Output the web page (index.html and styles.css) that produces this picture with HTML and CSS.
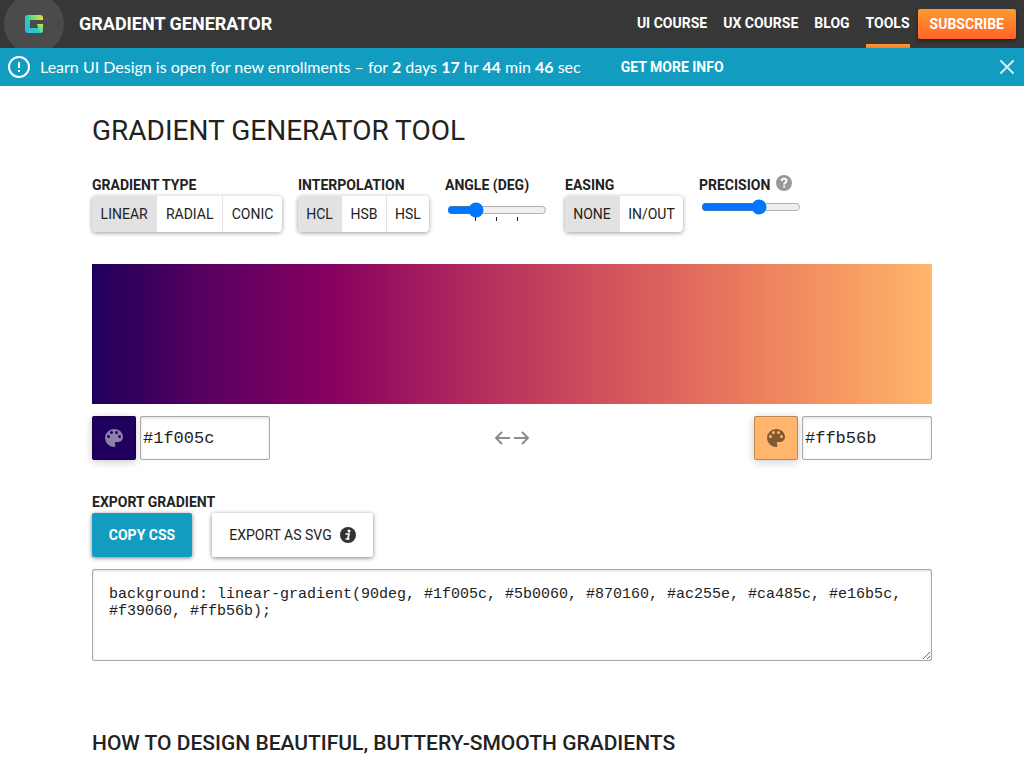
FILE: index.html
```html
<!DOCTYPE html>
<html lang="en">
<head>
<meta charset="utf-8">
<meta name="viewport" content="width=device-width, initial-scale=1">
<title>Gradient Generator</title>
<link rel="stylesheet" href="styles.css">
</head>
<body>
<header class="topbar">
  <a class="logo" href="#" aria-label="Home">
    <svg width="18" height="18" viewBox="0 0 18 18" aria-hidden="true">
      <defs>
        <linearGradient id="g-top" x1="0" x2="1"><stop offset="0" stop-color="#19d3b2"/><stop offset="1" stop-color="#e8e337"/></linearGradient>
        <linearGradient id="g-side" x1="0" y1="0" x2="0" y2="1"><stop offset="0" stop-color="#1fd3ae"/><stop offset="1" stop-color="#35b5e6"/></linearGradient>
        <linearGradient id="g-base" x1="0" x2="1"><stop offset="0" stop-color="#35b5e6"/><stop offset="1" stop-color="#27d8b4"/></linearGradient>
      </defs>
      <path d="M3 0h12q3 0 3 3v2h-13l-5-2q0-3 3-3z" fill="url(#g-top)"/>
      <path d="M0 3q0-2 2-2l3 4v8l-3 5q-2-1-2-3z" fill="url(#g-side)"/>
      <path d="M5 13h8l5-2v4q0 3-3 3h-12q-2 0-2-2z" fill="url(#g-base)"/>
      <path d="M12 9h6v6q0 2-2 3l-3-5z" fill="#6fe08e"/>
      <path d="M12 9h6v3z" fill="#b7e65a"/>
    </svg>
  </a>
  <span class="site-name">GRADIENT GENERATOR</span>
  <nav class="nav">
    <a href="#">UI COURSE</a>
    <a href="#">UX COURSE</a>
    <a href="#">BLOG</a>
    <a href="#" class="current" aria-current="page">TOOLS</a>
  </nav>
  <a class="subscribe" href="#">SUBSCRIBE</a>
</header>

<aside class="banner">
  <svg width="22" height="22" viewBox="0 0 22 22" fill="none" stroke="#fff" stroke-width="2" aria-hidden="true">
    <circle cx="11" cy="11" r="10"/><path d="M11 6v6M11 14v2"/>
  </svg>
  <p class="banner-text">Learn UI Design is open for new enrollments – for <b>2</b> days <b>17</b> hr <b>44</b> min <b>46</b> sec</p>
  <a class="banner-link" href="#">GET MORE INFO</a>
  <button class="close" type="button" aria-label="Close">
    <svg width="14" height="14" viewBox="0 0 14 14" fill="none" stroke="#d3eef5" stroke-width="2" stroke-linecap="round"><path d="M1 1l12 12M13 1L1 13"/></svg>
  </button>
</aside>

<main class="page">
  <h1 class="title">GRADIENT GENERATOR TOOL</h1>

  <div class="controls">
    <div class="control">
      <span class="label" id="type-label">GRADIENT TYPE</span>
      <div class="segments" role="group" aria-labelledby="type-label">
        <button type="button" aria-pressed="true">LINEAR</button>
        <button type="button" aria-pressed="false">RADIAL</button>
        <button type="button" aria-pressed="false">CONIC</button>
      </div>
    </div>
    <div class="control">
      <span class="label" id="interp-label">INTERPOLATION</span>
      <div class="segments" role="group" aria-labelledby="interp-label">
        <button type="button" aria-pressed="true">HCL</button>
        <button type="button" aria-pressed="false">HSB</button>
        <button type="button" aria-pressed="false">HSL</button>
      </div>
    </div>
    <div class="control">
      <label class="label" for="angle">ANGLE (DEG)</label>
      <input class="slider" type="range" id="angle" min="0" max="360" value="90" list="angles">
      <datalist id="angles"><option value="90"></option><option value="180"></option><option value="270"></option></datalist>
    </div>
    <div class="control">
      <span class="label" id="easing-label">EASING</span>
      <div class="segments" role="group" aria-labelledby="easing-label">
        <button type="button" aria-pressed="true">NONE</button>
        <button type="button" aria-pressed="false">IN/OUT</button>
      </div>
    </div>
    <div class="control">
      <div class="label-row">
        <label class="label" for="precision">PRECISION</label>
        <svg class="help" width="16" height="16" viewBox="0 0 16 16" aria-hidden="true"><circle cx="8" cy="8" r="8" fill="#999"/><path d="M5.600 6q.2-2.200 2.500-2.200T10.500 5.900q0 1.200-1.300 1.900-1 .5-1 1.600" fill="none" stroke="#fff" stroke-width="2"/><path d="M7.200 10.500h2v2h-2z" fill="#fff"/></svg>
      </div>
      <input class="slider" type="range" id="precision" min="0" max="100" value="60">
    </div>
  </div>

  <div class="preview"></div>

  <div class="colors">
    <div class="color">
      <button class="swatch swatch-start" type="button" aria-label="Pick start color">
        <svg width="24" height="24" viewBox="0 0 24 24" fill="currentColor" aria-hidden="true"><path d="M12 3a9 9 0 0 0 0 18c.83 0 1.500-.67 1.500-1.500 0-.39-.15-.74-.39-1.010-.23-.26-.38-.61-.38-.99 0-.83.67-1.500 1.500-1.500H16c2.760 0 5-2.240 5-5 0-4.420-4.030-8-9-8zm-5.500 9a1.500 1.500 0 1 1 0-3 1.500 1.500 0 0 1 0 3zm3-4a1.500 1.500 0 1 1 0-3 1.500 1.500 0 0 1 0 3zm5 0a1.500 1.500 0 1 1 0-3 1.500 1.500 0 0 1 0 3zm3 4a1.500 1.500 0 1 1 0-3 1.500 1.500 0 0 1 0 3z"/></svg>
      </button>
      <input class="hex" type="text" value="#1f005c" aria-label="Start color">
    </div>
    <button class="swap" type="button" aria-label="Swap colors">
      <svg width="36" height="16" viewBox="0 0 36 16" fill="none" stroke="#8c8c8c" stroke-width="2" aria-hidden="true"><path d="M16 8H2M8 2L2 8l6 6M20 8h14M28 2l6 6-6 6"/></svg>
    </button>
    <div class="color">
      <button class="swatch swatch-end" type="button" aria-label="Pick end color">
        <svg width="24" height="24" viewBox="0 0 24 24" fill="currentColor" aria-hidden="true"><path d="M12 3a9 9 0 0 0 0 18c.83 0 1.500-.67 1.500-1.500 0-.39-.15-.74-.39-1.010-.23-.26-.38-.61-.38-.99 0-.83.67-1.500 1.500-1.500H16c2.760 0 5-2.240 5-5 0-4.420-4.030-8-9-8zm-5.500 9a1.500 1.500 0 1 1 0-3 1.500 1.500 0 0 1 0 3zm3-4a1.500 1.500 0 1 1 0-3 1.500 1.500 0 0 1 0 3zm5 0a1.500 1.500 0 1 1 0-3 1.500 1.500 0 0 1 0 3zm3 4a1.500 1.500 0 1 1 0-3 1.500 1.500 0 0 1 0 3z"/></svg>
      </button>
      <input class="hex" type="text" value="#ffb56b" aria-label="End color">
    </div>
  </div>

  <section class="export">
    <label class="label" for="css-output">EXPORT GRADIENT</label>
    <div class="actions">
      <button class="button button-primary" type="button">COPY CSS</button>
      <button class="button button-svg" type="button">EXPORT AS SVG
        <svg width="16" height="16" viewBox="0 0 16 16" aria-hidden="true"><circle cx="8" cy="8" r="8" fill="#333"/><circle cx="9" cy="4" r="1.500" fill="#fff"/><path d="M5.500 7h3.500l-1.200 5M5.500 12h4" fill="none" stroke="#fff" stroke-width="1.700"/></svg>
      </button>
    </div>
    <textarea class="output" id="css-output" spellcheck="false">background: linear-gradient(90deg, #1f005c, #5b0060, #870160, #ac255e, #ca485c, #e16b5c, #f39060, #ffb56b);</textarea>
  </section>

  <h2 class="subtitle">HOW TO DESIGN BEAUTIFUL, BUTTERY-SMOOTH GRADIENTS</h2>
</main>
</body>
</html>
```

FILE: styles.css
```css
* { box-sizing: border-box; }

body {
  margin: 0;
  background: #fff;
  color: #222;
  font: 14px/20px Roboto, "Liberation Sans", sans-serif;
}

button, input, textarea { font: inherit; color: inherit; margin: 0; }
button { border: 0; background: none; padding: 0; cursor: pointer; }
a { color: inherit; text-decoration: none; }
svg { display: block; flex: none; }

.topbar {
  display: flex;
  align-items: center;
  height: 48px;
  padding: 0 8px 0 4px;
  background: #373737;
  color: #fff;
  overflow: hidden;
}

.logo {
  display: flex;
  align-items: center;
  justify-content: center;
  flex: none;
  width: 60px;
  height: 60px;
  border-radius: 50%;
  background: #4b4b4b;
}

.site-name {
  margin-left: 15px;
  font-size: 18px;
  font-weight: 700;
}

.nav {
  display: flex;
  gap: 16px;
  margin-left: auto;
  height: 48px;
  font-weight: 700;
}

.nav a {
  line-height: 46px;
  white-space: nowrap;
}

.nav .current {
  background: linear-gradient(#ff9a30, #ff7a2a) bottom / 100% 4px no-repeat;
}

.subscribe {
  margin-left: 8px;
  padding: 0 12px;
  border-radius: 2px;
  background: linear-gradient(#ff9a30, #ff6428);
  box-shadow: 0 2px 4px rgba(0, 0, 0, .4);
  font-weight: 700;
  line-height: 30px;
}

.banner {
  display: flex;
  align-items: center;
  min-height: 38px;
  padding: 0 8px;
  background: #119cc0;
  color: #fff;
}

.banner-text {
  margin: 0 40px 0 10px;
  font-family: Lato, "Liberation Sans", sans-serif;
  font-size: 16px;
}

.banner-link { font-weight: 700; }
.close { margin-left: auto; padding: 2px; }

.page {
  max-width: 872px;
  margin: 0 auto;
  padding: 29px 16px;
}

.title {
  margin: 0 0 28px;
  font-size: 28px;
  font-weight: 400;
  line-height: 32px;
}

.controls {
  display: grid;
  grid-template-columns: 190px 131px 104px 118px auto;
  gap: 16px;
}

.control { display: flex; flex-direction: column; }

.label {
  display: block;
  font-weight: 700;
  line-height: 21px;
}

.label-row {
  display: flex;
  gap: 6px;
}

.segments {
  display: flex;
  border-radius: 4px;
  box-shadow: 0 1px 4px rgba(0, 0, 0, .4);
  overflow: hidden;
}

.segments button {
  flex: 1 0 auto;
  padding: 0 8px;
  line-height: 36px;
}

.segments button + button { border-left: 1px solid #e2e2e2; }
.segments [aria-pressed="true"] { background: #e2e2e2; }

.slider {
  width: 100px;
  margin: 3px 2px;
}

.preview {
  height: 140px;
  margin-top: 32px;
  background: linear-gradient(90deg, #1f005c, #5b0060, #870160, #ac255e, #ca485c, #e16b5c, #f39060, #ffb56b);
}

.colors {
  display: flex;
  justify-content: space-between;
  align-items: center;
  margin-top: 12px;
}

.color { display: flex; gap: 4px; }

.swatch {
  display: flex;
  align-items: center;
  justify-content: center;
  width: 44px;
  height: 44px;
  border: 1px solid rgba(0, 0, 0, .25);
  border-radius: 2px;
  box-shadow: 0 2px 8px rgba(0, 0, 0, .2);
}

.swatch-start { background: #1f005c; color: rgba(255, 255, 255, .5); }
.swatch-end { background: #ffb56b; color: rgba(0, 0, 0, .5); }

.hex, .output {
  border: 1px solid #aaa;
  border-radius: 2px;
  background: #fff;
  box-shadow: inset 0 1px 3px rgba(0, 0, 0, .15);
  font-family: "Liberation Mono", monospace;
}

.hex {
  width: 130px;
  height: 44px;
  padding: 0 2px;
  font-size: 17px;
}

.export { margin-top: 32px; }

.actions { display: flex; gap: 20px; }

.button {
  display: flex;
  align-items: center;
  justify-content: center;
  gap: 8px;
  min-width: 100px;
  padding: 0 16px;
  border-radius: 2px;
  background: #fff;
  box-shadow: 0 1px 4px rgba(0, 0, 0, .5);
  line-height: 44px;
}

.button-svg { min-width: 161px; }

.button-primary {
  background: #119cc0;
  color: #fff;
  font-weight: 700;
}

.output {
  display: block;
  width: 100%;
  height: 92px;
  margin-top: 12px;
  padding: 16px;
  font-size: 15px;
  line-height: 17px;
  resize: vertical;
}

.subtitle {
  margin: 68px 0 0;
  font-size: 21px;
  font-weight: 500;
  line-height: 28px;
}
```
